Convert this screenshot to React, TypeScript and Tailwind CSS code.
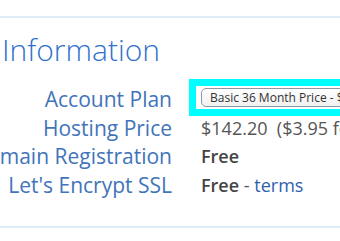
export default function App() {
  const rows = [
    { label: 'Hosting Price', value: <span>$142.20&nbsp; ($3.95 for 36 months)</span> },
    { label: 'Domain Registration', value: <span className="font-semibold text-[#444]">Free</span> },
    {
      label: "Let's Encrypt SSL",
      value: (
        <span>
          <span className="font-semibold text-[#444]">Free</span> - <span className="text-[#2f5fae]">terms</span>
        </span>
      ),
    },
  ];

  return (
    <div className="h-[241px] w-[340px] overflow-hidden bg-white font-['Open_Sans',sans-serif]">
      <div className="mt-4 border-t-2 border-[#e1ecfa]" />
      <h2 className="mt-[14px] pl-[2px] text-[30px] leading-[36px] font-light text-[#2f72cc] whitespace-nowrap">
        Information
      </h2>

      <div className="mt-[15px] flex flex-col">
        {/* Account Plan row with focused select */}
        <div className="flex h-[29px] items-center">
          <div className="flex w-[172px] shrink-0 justify-end whitespace-nowrap pt-[4px] text-[21px] text-[#4174ba]">
            Account Plan
          </div>
          <div className="-my-[4px] ml-[17px] flex h-[37px] flex-1 items-center bg-[#00ffff] p-[7px]">
            <div className="flex h-full w-full items-center bg-white pl-[5px]">
              <div className="flex h-[19px] w-[200px] shrink-0 items-center rounded-[5px] border border-[#8d97a3] bg-gradient-to-b from-white to-[#f1f1f1] pl-[8px] text-[12px] whitespace-nowrap text-[#333]">
                Basic 36 Month Price - $3.95/mo
              </div>
            </div>
          </div>
        </div>

        {rows.map((r) => (
          <div key={r.label} className="flex h-[28.5px] items-center pt-[4px]">
            <div className="flex w-[172px] shrink-0 justify-end whitespace-nowrap text-[21px] text-[#4174ba]">
              {r.label}
            </div>
            <div className="ml-[29px] whitespace-nowrap text-[18px] text-[#555]">{r.value}</div>
          </div>
        ))}
      </div>

      <div className="mt-[28px] border-t-2 border-[#e1ecfa]" />
    </div>
  );
}
